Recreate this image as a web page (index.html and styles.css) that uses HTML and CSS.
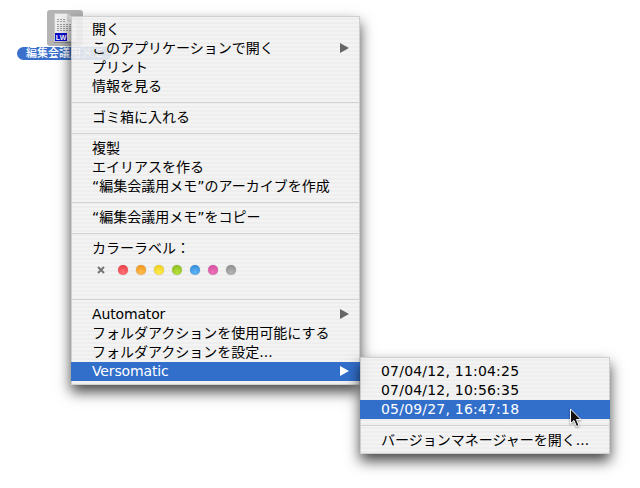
FILE: index.html
```html
<!DOCTYPE html>
<html lang="ja">
<head>
<meta charset="utf-8">
<title>Versomatic</title>
<link rel="stylesheet" href="styles.css">
</head>
<body>
<div class="desktop">
  <div class="file">
    <div class="file-thumb">
      <svg class="doc" width="36" height="36" viewBox="0 0 36 36">
        <path d="M7 4.500H21L30 12V33H7Z" fill="#8e8e8e"/>
        <path d="M7.500 3.500H21L29.500 11V31.500H7.500Z" fill="#efefef" stroke="#c8c8c8"/>
        <path d="M21 3.500V11H29.500Z" fill="#dedede" stroke="#bdbdbd"/>
        <path d="M10 9.500h9M10 11.500h8M10 14.500h15M10 16.500h17M10 18.500h14M10 20.500h16" stroke="#a2a2a2" stroke-width="1" stroke-dasharray="2 1"/>
        <rect x="8" y="23" width="12" height="8" fill="#0a0ad0"/>
        <text class="doc-mark" x="14" y="30">LW</text>
      </svg>
    </div>
    <div class="file-label">編集会議用メモ</div>
  </div>

  <div class="menu menu-main">
    <div class="item">開く</div>
    <div class="item has-sub">このアプリケーションで開く</div>
    <div class="item">プリント</div>
    <div class="item">情報を見る</div>
    <div class="sep"></div>
    <div class="item">ゴミ箱に入れる</div>
    <div class="sep"></div>
    <div class="item">複製</div>
    <div class="item">エイリアスを作る</div>
    <div class="item">“編集会議用メモ”のアーカイブを作成</div>
    <div class="sep"></div>
    <div class="item">“編集会議用メモ”をコピー</div>
    <div class="sep"></div>
    <div class="item">カラーラベル：</div>
    <div class="labels">
      <svg class="label-x" width="8" height="8" viewBox="0 0 8 8"><path d="M1 1L7 7M7 1L1 7" stroke="#747474" stroke-width="2"/></svg>
      <span class="dot red"></span>
      <span class="dot orange"></span>
      <span class="dot yellow"></span>
      <span class="dot green"></span>
      <span class="dot blue"></span>
      <span class="dot pink"></span>
      <span class="dot gray"></span>
    </div>
    <div class="sep"></div>
    <div class="item has-sub latin">Automator</div>
    <div class="item">フォルダアクションを使用可能にする</div>
    <div class="item">フォルダアクションを設定...</div>
    <div class="item has-sub active latin">Versomatic</div>
  </div>

  <div class="menu menu-sub">
    <div class="item date">07/04/12, 11:04:25</div>
    <div class="item date">07/04/12, 10:56:35</div>
    <div class="item active date">05/09/27, 16:47:18</div>
    <div class="sep"></div>
    <div class="item">バージョンマネージャーを開く...</div>
  </div>

  <svg class="cursor" width="15" height="20" viewBox="0 0 15 20">
    <path d="M1.500 1V15.500L5 12.500L7.500 18.500L10 17.500L7.500 11.500H12Z" fill="#111" stroke="#fff" stroke-width="1"/>
  </svg>
</div>
</body>
</html>
```
FILE: styles.css
```css
* { box-sizing: border-box; }
html, body { margin: 0; padding: 0; background: #fff; }
body {
  font-family: "DejaVu Sans", "Noto Sans CJK JP", sans-serif;
  font-size: 14px;
  color: #000;
}
.desktop {
  position: relative;
  width: 640px;
  height: 488px;
  overflow: hidden;
  background: #fff;
}
.file {
  position: absolute;
  left: 17px;
  top: 10px;
  width: 95px;
  display: flex;
  flex-direction: column;
  align-items: center;
}
.file-thumb {
  width: 36px;
  height: 36px;
  background: #b4b4b4;
  border-radius: 3px;
  margin-bottom: 1px;
}
.doc { display: block; }
.doc-mark {
  font-family: "Liberation Sans", sans-serif;
  font-size: 7px;
  font-weight: 700;
  fill: #fff;
  text-anchor: middle;
}
.file-label {
  width: 95px;
  height: 13px;
  line-height: 13px;
  border-radius: 7px;
  background: #3a6fcb;
  color: #fff;
  font-size: 11px;
  font-weight: 500;
  text-align: center;
  white-space: nowrap;
  overflow: hidden;
}
.menu {
  position: absolute;
  background: repeating-linear-gradient(to bottom, rgba(242,242,242,.9) 0, rgba(242,242,242,.9) 2px, rgba(236,236,236,.9) 2px, rgba(236,236,236,.9) 4px);
  box-shadow: inset 0 0 0 1px rgba(0,0,0,.14), 0 7px 13px rgba(0,0,0,.72);
}
.menu-main {
  left: 71px;
  top: 16px;
  width: 289px;
  padding: 4px 0 4px;
}
.menu-sub {
  left: 360px;
  top: 357px;
  width: 250px;
  padding: 5px 0 4px;
}
.item {
  position: relative;
  height: 19px;
  line-height: 19px;
  padding-left: 21px;
  white-space: nowrap;
}
.latin { letter-spacing: -.15px; }
.date { letter-spacing: .2px; }
.has-sub::after {
  content: "";
  position: absolute;
  right: 11px;
  top: 4px;
  border-left: 9px solid #666;
  border-top: 5px solid transparent;
  border-bottom: 5px solid transparent;
}
.active {
  background: #326fcb;
  color: #fff;
}
.active.has-sub::after { border-left-color: #fff; }
.sep {
  height: 12px;
  display: flex;
  align-items: center;
}
.sep::before {
  content: "";
  display: block;
  width: 100%;
  height: 1px;
  background: #d3d3d3;
}
.labels {
  height: 35px;
  padding: 7px 0 18px 26px;
  display: flex;
  align-items: center;
  gap: 8px;
}
.label-x {
  display: block;
  margin-right: 5px;
}
.dot {
  width: 10px;
  height: 10px;
  border-radius: 50%;
  box-shadow: 0 0 1px rgba(0,0,0,.4);
}
.red { background: radial-gradient(circle at 50% 75%, #ff7477, #e62f3a); }
.orange { background: radial-gradient(circle at 50% 75%, #ffbe50, #ea8a10); }
.yellow { background: radial-gradient(circle at 50% 75%, #ffec50, #e9c612); }
.green { background: radial-gradient(circle at 50% 75%, #b8e040, #82b518); }
.blue { background: radial-gradient(circle at 50% 75%, #60b6f4, #2a82d4); }
.pink { background: radial-gradient(circle at 50% 75%, #ee72ba, #cc4698); }
.gray { background: radial-gradient(circle at 50% 75%, #b4b4b4, #868686); }
.cursor {
  position: absolute;
  left: 569px;
  top: 408px;
  filter: drop-shadow(0 1px 1px rgba(0,0,0,.4));
}
```
